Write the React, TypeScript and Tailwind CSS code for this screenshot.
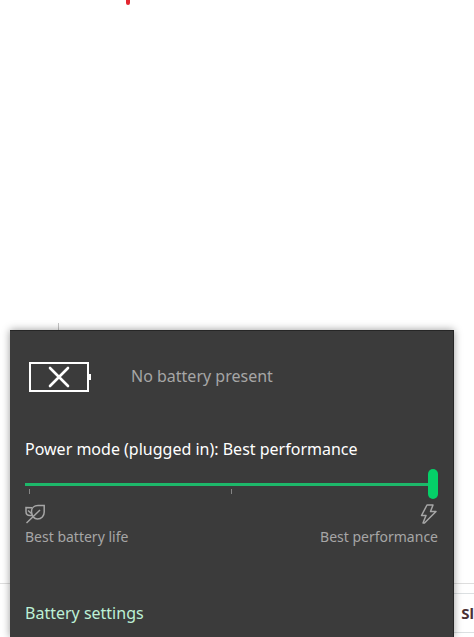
import { useState } from 'react'

const MODES = ['Best battery life', 'Better performance', 'Best performance']

function BatteryIcon() {
  return (
    <svg width="62" height="32" viewBox="0 -2 62 32" fill="none" stroke="#fff" strokeWidth="2" aria-hidden="true">
      <path d="M1 1h58v28H1z" />
      <path d="M21 6l18 18M39 6L21 24" strokeWidth="2.6" strokeLinecap="round" />
      <path d="M60 12h2v6h-2z" fill="#fff" stroke="none" />
    </svg>
  )
}

function LeafIcon() {
  return (
    <svg width="20" height="20" viewBox="0 0 20 20" fill="none" stroke="#a6a6a6" strokeWidth="1.5" aria-hidden="true">
      <path d="M19.200 1.500H13c-4 0-6.500 2.500-6.500 6 0 5 3 7.500 6 7.500 4 0 6.700-3 6.700-7z" />
      <path d="M1.500 19L15 6" />
      <path d="M7 3.800L1 3.500v4c0 2.500 1.500 4 4 4h2M3 6.500l4 3.500" />
    </svg>
  )
}

function BoltIcon() {
  return (
    <svg width="18" height="20" viewBox="0 0 18 20" fill="none" stroke="#a6a6a6" strokeWidth="1.5" strokeLinejoin="round" aria-hidden="true">
      <path d="M7 1h6l-2.500 6.500H16L4.500 19H3l3-7.500H1.500z" />
    </svg>
  )
}

function PowerFlyout() {
  const [mode, setMode] = useState(2)

  return (
    <section className="absolute bottom-0 left-2.5 right-5 h-[307px] border-t border-r border-[#262626] bg-[#3b3b3b] px-[15px] pt-[29px] text-[#a6a6a6] shadow-[0_0_8px_rgba(0,0,0,0.4)]">
      <div className="flex items-center gap-10 pl-1">
        <BatteryIcon />
        <p className="text-base leading-6">No battery present</p>
      </div>

      <label htmlFor="power-mode" className="mt-[45px] block text-base leading-6 text-white">
        Power mode (plugged in): {MODES[mode]}
      </label>
      <input
        id="power-mode"
        type="range"
        min={0}
        max={2}
        value={mode}
        onChange={(e) => setMode(Number(e.target.value))}
        className="mt-2 block h-[30px] w-full appearance-none bg-transparent [&::-webkit-slider-runnable-track]:h-[3px] [&::-webkit-slider-runnable-track]:bg-[#1db86a] [&::-webkit-slider-thumb]:-mt-[14px] [&::-webkit-slider-thumb]:h-[30px] [&::-webkit-slider-thumb]:w-2.5 [&::-webkit-slider-thumb]:appearance-none [&::-webkit-slider-thumb]:rounded-full [&::-webkit-slider-thumb]:bg-[#05d068]"
      />
      <div className="-mt-2.5 flex h-[5px] justify-between px-1">
        <span className="w-px bg-[#858585]" />
        <span className="w-px bg-[#858585]" />
        <span className="w-px" />
      </div>

      <div className="mt-2.5 flex justify-between text-sm leading-5">
        <div className="flex flex-col gap-[3px]">
          <LeafIcon />
          <span>{MODES[0]}</span>
        </div>
        <div className="flex flex-col items-end gap-[3px]">
          <BoltIcon />
          <span>{MODES[2]}</span>
        </div>
      </div>

      <a href="#battery-settings" className="mt-[54px] block text-base leading-6 text-[#bdf0d6]">
        Battery settings
      </a>
    </section>
  )
}

export default function App() {
  return (
    <main className="relative flex min-h-screen flex-col overflow-hidden bg-white font-['Noto_Sans','Open_Sans',sans-serif]">
      <div className="flex flex-1 flex-col justify-between border-b border-[#dedede]">
        <div className="ml-[126px] h-[5px] w-1 rounded-b-full bg-[#e32630]" />
        <div className="ml-[58px] h-[260px] w-px bg-[#c4c4c4]" />
      </div>
      <div className="flex h-[53px] flex-col items-end pt-[9px]">
        <div className="flex h-10 items-center border-y border-[#dce0e2] pl-2 text-[15px] font-bold text-[#4a3034]">
          Sl
        </div>
      </div>
      <PowerFlyout />
    </main>
  )
}
